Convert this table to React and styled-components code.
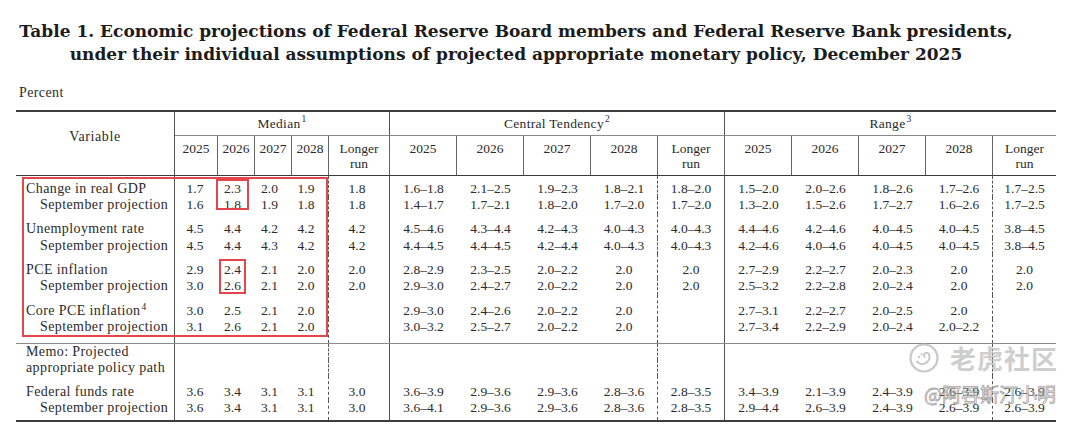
import React from "react";
import styled, { createGlobalStyle } from "styled-components";

const GlobalStyle = createGlobalStyle`
  html, body { margin: 0; padding: 0; background: #fff; }
  body {
    font-family: "Liberation Serif", "Times New Roman", serif;
    color: #2b2b2b;
  }
`;

const COLS = [159, 43, 37, 37, 37, 61, 67, 67, 67, 67, 67, 67, 67, 67, 67, 63];
const TEMPLATE = COLS.map((c) => `${c}px`).join(" ");

// body vertical rules per column: solid / dashed / none
const BODY_RULE = ["solid", "none", "none", "none", "dashed", "solid", "none", "none", "none", "dashed", "solid", "none", "none", "none", "dashed", "none"];
// small horizontal nudges of the body numbers in the median block
const BODY_PAD_RIGHT = [0, 3, 8, 8, 8, 4, 0, 0, 0, 0, 0, 0, 0, 0, 0, 0];

const Page = styled.div`
  position: relative;
  width: 1080px;
  height: 426px;
  overflow: hidden;
  background: #fff;
`;

const Title = styled.h1`
  margin: 0;
  padding-top: 20px;
  width: 1032px;
  text-align: center;
  font-family: "DejaVu Serif", "Liberation Serif", serif;
  font-weight: bold;
  font-size: 17px;
  line-height: 22.5px;
  color: #1c1c1c;
`;

const TitleLine = styled.span`
  display: block;
  white-space: nowrap;
`;

const Unit = styled.div`
  margin: 20px 0 0 19px;
  font-size: 14px;
  line-height: 16px;
  letter-spacing: 0.4px;
  color: #2b2b2b;
`;

const Table = styled.div`
  margin: 9px 0 0 16px;
  width: 1040px;
  border-top: 2px solid #3d3d3d;
  border-bottom: 2px solid #3d3d3d;
`;

const Head = styled.div`
  display: grid;
  grid-template-columns: ${TEMPLATE};
  grid-template-rows: 24px 39px;
  border-bottom: 1px solid #3d3d3d;
  font-size: 13.5px;
`;

const VariableHead = styled.div`
  grid-row: 1 / span 2;
  grid-column: 1;
  border-right: 1px solid #555;
  padding-top: 17px;
  text-align: center;
  font-size: 14px;
  line-height: 16px;
  letter-spacing: 0.6px;
`;

const GroupHead = styled.div`
  grid-row: 1;
  grid-column: span 5;
  display: flex;
  align-items: center;
  justify-content: center;
  border-bottom: 1px solid #8a8a8a;
  border-right: ${(p) => (p.$last ? "none" : "1px solid #555")};
  line-height: 16px;
  letter-spacing: 0.3px;
`;

const Sup = styled.sup`
  position: relative;
  top: -5px;
  font-size: 9.5px;
  line-height: 0;
  vertical-align: baseline;
  margin-left: 1px;
`;

const YearHead = styled.div`
  grid-row: 2;
  border-right: ${(p) => (p.$last ? "none" : "1px solid #666")};
  padding-top: 5px;
  text-align: center;
  line-height: 15px;
`;

const Section = styled.div`
  border-top: ${(p) => (p.$ruled ? "1px solid #8a8a8a" : "none")};
`;

const Row = styled.div`
  display: grid;
  grid-template-columns: ${TEMPLATE};
  line-height: ${(p) => p.$lh}px;
  & > div {
    padding-top: ${(p) => p.$top}px;
    padding-bottom: ${(p) => p.$bottom}px;
  }
`;

const Label = styled.div`
  border-right: 1px solid #555;
  padding-left: ${(p) => (p.$indent ? 24 : 10)}px;
  font-size: 14px;
  letter-spacing: 0.4px;
  white-space: nowrap;
`;

const Num = styled.div`
  border-right: ${(p) => (p.$rule === "none" ? "none" : `1px ${p.$rule} #555`)};
  padding-right: ${(p) => p.$pr}px;
  text-align: center;
  font-size: 13.5px;
  white-space: nowrap;
`;

const Mark = styled.div`
  position: absolute;
  left: ${(p) => p.$x}px;
  top: ${(p) => p.$y}px;
  width: ${(p) => p.$w}px;
  height: ${(p) => p.$h}px;
  border: 2px solid #e5464e;
  box-sizing: border-box;
  pointer-events: none;
`;

const Watermark = styled.div`
  position: absolute;
  left: 906px;
  top: 341px;
  display: flex;
  flex-direction: column;
  align-items: flex-start;
  gap: 7px;
  pointer-events: none;
`;

const BrandRow = styled.div`
  display: flex;
  align-items: center;
  gap: 10px;
  padding-left: 2px;
`;

const Brand = styled.span`
  font-family: "Noto Sans CJK SC", sans-serif;
  font-weight: 700;
  font-size: 26px;
  line-height: 34px;
  letter-spacing: 1px;
  color: rgba(190, 190, 190, 0.75);
`;

const Handle = styled.span`
  margin-left: 18px;
  font-family: "Noto Sans CJK SC", sans-serif;
  font-size: 19px;
  line-height: 24px;
  color: rgba(255, 255, 255, 0.55);
  -webkit-text-stroke: 0.8px rgba(120, 120, 120, 0.7);
  white-space: nowrap;
`;

const HEAD_GROUPS = [
  { name: "Median", sup: "1" },
  { name: "Central Tendency", sup: "2" },
  { name: "Range", sup: "3" },
];

const YEARS = ["2025", "2026", "2027", "2028"];

const D = "\u2013";
const r = (s) => s.replace(/-/g, D);

const SECTIONS = [
  {
    lh: 16.6,
    top: 4.5,
    bottom: 7.4,
    gap: 7.5,
    rows: [
      { label: "Change in real GDP", v: "1.7 2.3 2.0 1.9 1.8 1.6-1.8 2.1-2.5 1.9-2.3 1.8-2.1 1.8-2.0 1.5-2.0 2.0-2.6 1.8-2.6 1.7-2.6 1.7-2.5" },
      { label: "September projection", indent: true, v: "1.6 1.8 1.9 1.8 1.8 1.4-1.7 1.7-2.1 1.8-2.0 1.7-2.0 1.7-2.0 1.3-2.0 1.5-2.6 1.7-2.7 1.6-2.6 1.7-2.5" },
      { label: "Unemployment rate", gap: true, v: "4.5 4.4 4.2 4.2 4.2 4.5-4.6 4.3-4.4 4.2-4.3 4.0-4.3 4.0-4.3 4.4-4.6 4.2-4.6 4.0-4.5 4.0-4.5 3.8-4.5" },
      { label: "September projection", indent: true, v: "4.5 4.4 4.3 4.2 4.2 4.4-4.5 4.4-4.5 4.2-4.4 4.0-4.3 4.0-4.3 4.2-4.6 4.0-4.6 4.0-4.5 4.0-4.5 3.8-4.5" },
      { label: "PCE inflation", gap: true, v: "2.9 2.4 2.1 2.0 2.0 2.8-2.9 2.3-2.5 2.0-2.2 2.0 2.0 2.7-2.9 2.2-2.7 2.0-2.3 2.0 2.0" },
      { label: "September projection", indent: true, v: "3.0 2.6 2.1 2.0 2.0 2.9-3.0 2.4-2.7 2.0-2.2 2.0 2.0 2.5-3.2 2.2-2.8 2.0-2.4 2.0 2.0" },
      { label: "Core PCE inflation", sup: "4", gap: true, v: "3.0 2.5 2.1 2.0 _ 2.9-3.0 2.4-2.6 2.0-2.2 2.0 _ 2.7-3.1 2.2-2.7 2.0-2.5 2.0 _" },
      { label: "September projection", indent: true, last: true, v: "3.1 2.6 2.1 2.0 _ 3.0-3.2 2.5-2.7 2.0-2.2 2.0 _ 2.7-3.4 2.2-2.9 2.0-2.4 2.0-2.2 _" },
    ],
  },
  {
    lh: 16,
    top: 0,
    bottom: 4,
    gap: 7.7,
    ruled: true,
    rows: [
      { label: "Memo: Projected", v: "" },
      { label: "appropriate policy path", v: "" },
      { label: "Federal funds rate", gap: true, v: "3.6 3.4 3.1 3.1 3.0 3.6-3.9 2.9-3.6 2.9-3.6 2.8-3.6 2.8-3.5 3.4-3.9 2.1-3.9 2.4-3.9 2.6-3.9 2.6-3.9" },
      { label: "September projection", indent: true, last: true, v: "3.6 3.4 3.1 3.1 3.0 3.6-4.1 2.9-3.6 2.9-3.6 2.8-3.6 2.8-3.5 2.9-4.4 2.6-3.9 2.4-3.9 2.6-3.9 2.6-3.9" },
    ],
  },
];

function values(v) {
  const parts = v ? v.split(" ") : [];
  return Array.from({ length: 15 }, (_, i) => {
    const s = parts[i];
    return !s || s === "_" ? "" : r(s);
  });
}

function TigerLogo() {
  return (
    <svg width="32" height="32" viewBox="0 0 32 32" aria-hidden="true">
      <circle cx="16" cy="16" r="13.5" fill="none" stroke="rgba(185,185,185,0.8)" strokeWidth="2.2" />
      <path
        d="M9 19.5c1.5 2.5 5 3.2 8 1.8 3.2-1.5 5-4.6 4.4-7.8-.4-2-2-3-3.6-2.6-1.8.5-2.3 2.5-1.2 3.8"
        fill="none"
        stroke="rgba(185,185,185,0.8)"
        strokeWidth="2"
        strokeLinecap="round"
      />
      <circle cx="11" cy="15" r="1.2" fill="rgba(185,185,185,0.8)" />
      <circle cx="13.5" cy="12.3" r="1.1" fill="rgba(185,185,185,0.8)" />
    </svg>
  );
}

export default function App() {
  return (
    <>
      <GlobalStyle />
      <Page>
        <Title>
          <TitleLine>Table 1. Economic projections of Federal Reserve Board members and Federal Reserve Bank presidents,</TitleLine>
          <TitleLine>under their individual assumptions of projected appropriate monetary policy, December 2025</TitleLine>
        </Title>
        <Unit>Percent</Unit>
        <Table>
          <Head>
            <VariableHead>Variable</VariableHead>
            {HEAD_GROUPS.map((g, i) => (
              <GroupHead key={g.name} $last={i === 2}>
                {g.name}
                <Sup>{g.sup}</Sup>
              </GroupHead>
            ))}
            {HEAD_GROUPS.flatMap((g, gi) =>
              [...YEARS, "Longer run"].map((y, yi) => (
                <YearHead key={`${gi}-${yi}`} $last={gi === 2 && yi === 4}>
                  {y === "Longer run" ? (
                    <>
                      Longer
                      <br />
                      run
                    </>
                  ) : (
                    y
                  )}
                </YearHead>
              ))
            )}
          </Head>
          {SECTIONS.map((sec, si) => (
            <Section key={si} $ruled={sec.ruled}>
              {sec.rows.map((row, ri) => (
                <Row
                  key={ri}
                  $lh={sec.lh}
                  $top={ri === 0 ? sec.top : row.gap ? sec.gap : 0}
                  $bottom={row.last ? sec.bottom : 0}
                >
                  <Label $indent={row.indent}>
                    {row.label}
                    {row.sup && <Sup>{row.sup}</Sup>}
                  </Label>
                  {values(row.v).map((val, ci) => (
                    <Num key={ci} $rule={BODY_RULE[ci + 1]} $pr={BODY_PAD_RIGHT[ci + 1]}>
                      {val}
                    </Num>
                  ))}
                </Row>
              ))}
            </Section>
          ))}
        </Table>

        <Mark $x={22} $y={177} $w={306} $h={160} />
        <Mark $x={216} $y={179} $w={33} $h={31} />
        <Mark $x={219} $y={259} $w={27} $h={35} />

        <Watermark>
          <BrandRow>
            <TigerLogo />
            <Brand>老虎社区</Brand>
          </BrandRow>
          <Handle>@阿吞斯汀小明</Handle>
        </Watermark>
      </Page>
    </>
  );
}
